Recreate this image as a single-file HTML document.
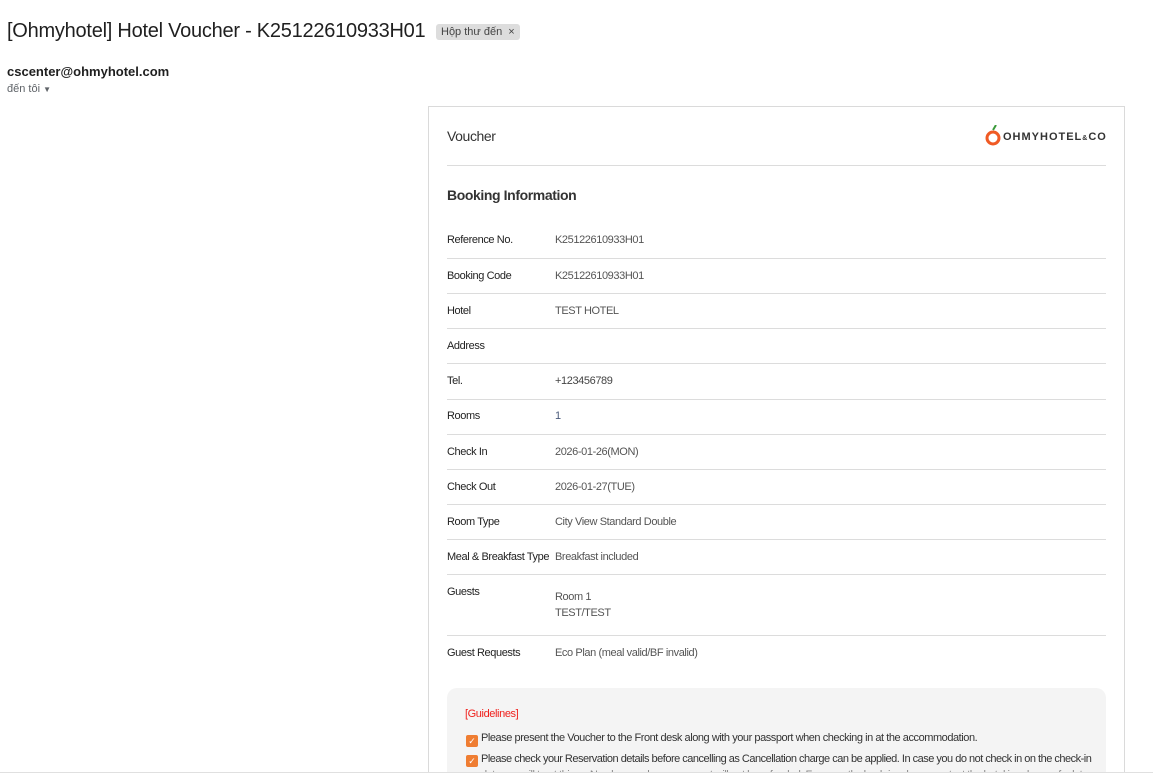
<!DOCTYPE html>
<html><head><meta charset="utf-8"><style>
*{margin:0;padding:0;box-sizing:border-box}
html,body{width:1153px;height:777px;overflow:hidden}
body{background:#fff;font-family:"Liberation Sans",sans-serif;position:relative;color:#222}
.a{position:absolute;white-space:nowrap}
.t{font-size:20px;color:#1f1f1f;left:7px;top:20px;letter-spacing:-0.25px}
.tag{left:436px;top:24px;background:#ddd;color:#444;font-size:11px;padding:2px 5px;border-radius:3px}
.card{position:absolute;left:428px;top:106px;width:697px;height:680px;border:1px solid #dadada}
.l{font-size:11px;letter-spacing:-0.4px;color:#222}
.v{font-size:11px;letter-spacing:-0.4px;color:#555}
.hr{position:absolute;left:447px;width:659px;height:1px;background:#dcdcdc}
.g{position:absolute;left:447px;top:688px;width:659px;height:120px;background:#f4f4f4;border-radius:10px}
.cb{position:absolute;width:12px;height:12px;background:#ef7d32;border-radius:2px;color:#fff;font-size:9px;line-height:12px;text-align:center}
.gt{font-size:11px;letter-spacing:-0.45px;color:#333}
</style></head><body>
<div class="a t">[Ohmyhotel] Hotel Voucher - K25122610933H01</div>
<div class="a tag">Hộp thư đến &nbsp;×</div>
<div class="a" style="left:7px;top:64px;font-size:13px;font-weight:bold;color:#1f1f1f">cscenter@ohmyhotel.com</div>
<div class="a" style="left:7px;top:83px;font-size:11px;color:#5f6368">đến tôi <span style="font-size:8px">▼</span></div>
<div class="card"></div>
<div class="a" style="left:447px;top:128px;font-size:14px;letter-spacing:-0.4px;color:#333">Voucher</div>
<div class="a" style="left:985px;top:125px;width:14px;height:20px">
<svg width="16" height="22" viewBox="0 0 16 22"><path d="M8 5 L11 0" stroke="#3a9a3a" stroke-width="2"/><circle cx="8" cy="13" r="6" fill="none" stroke="#f05a24" stroke-width="3"/></svg></div>
<div class="a" style="left:1003px;top:131px;font-size:11px;font-weight:bold;color:#333;letter-spacing:1px">OHMYHOTEL<span style="font-size:7px">&amp;</span>CO</div>
<div class="hr" style="top:165px"></div>
<div class="a" style="left:447px;top:187px;font-size:14px;font-weight:bold;letter-spacing:-0.4px;color:#333">Booking Information</div>

<div class="a l" style="left:447px;top:234px">Reference No.</div><div class="a v" style="left:555px;top:234px">K25122610933H01</div>
<div class="hr" style="top:258px"></div>
<div class="a l" style="left:447px;top:270px">Booking Code</div><div class="a v" style="left:555px;top:270px">K25122610933H01</div>
<div class="hr" style="top:293px"></div>
<div class="a l" style="left:447px;top:305px">Hotel</div><div class="a v" style="left:555px;top:305px">TEST HOTEL</div>
<div class="hr" style="top:328px"></div>
<div class="a l" style="left:447px;top:340px">Address</div>
<div class="hr" style="top:363px"></div>
<div class="a l" style="left:447px;top:375px">Tel.</div><div class="a v" style="left:555px;top:375px;color:#444">+123456789</div>
<div class="hr" style="top:399px"></div>
<div class="a l" style="left:447px;top:410px">Rooms</div><div class="a v" style="left:555px;top:410px;color:#4a5a7a">1</div>
<div class="hr" style="top:434px"></div>
<div class="a l" style="left:447px;top:446px">Check In</div><div class="a v" style="left:555px;top:446px">2026-01-26(MON)</div>
<div class="hr" style="top:469px"></div>
<div class="a l" style="left:447px;top:481px">Check Out</div><div class="a v" style="left:555px;top:481px">2026-01-27(TUE)</div>
<div class="hr" style="top:504px"></div>
<div class="a l" style="left:447px;top:516px">Room Type</div><div class="a v" style="left:555px;top:516px">City View Standard Double</div>
<div class="hr" style="top:539px"></div>
<div class="a l" style="left:447px;top:551px">Meal &amp; Breakfast Type</div><div class="a v" style="left:555px;top:551px">Breakfast included</div>
<div class="hr" style="top:574px"></div>
<div class="a l" style="left:447px;top:586px">Guests</div><div class="a v" style="left:555px;top:591px">Room 1</div><div class="a v" style="left:555px;top:607px">TEST/TEST</div>
<div class="hr" style="top:635px"></div>
<div class="a l" style="left:447px;top:647px">Guest Requests</div><div class="a v" style="left:555px;top:647px">Eco Plan (meal valid/BF invalid)</div>

<div class="g"></div>
<div class="a" style="left:465px;top:708px;font-size:11px;letter-spacing:-0.4px;color:#f0201c">[Guidelines]</div>
<div class="cb" style="left:466px;top:735px">✓</div>
<div class="a gt" style="left:481px;top:732px">Please present the Voucher to the Front desk along with your passport when checking in at the accommodation.</div>
<div class="cb" style="left:466px;top:755px">✓</div>
<div class="a gt" style="left:481px;top:753px;letter-spacing:-0.5px">Please check your Reservation details before cancelling as Cancellation charge can be applied. In case you do not check in on the check-in</div>
<div class="a gt" style="left:481px;top:769px;color:#888;letter-spacing:-0.5px">date, we will treat this as No-show and your payment will not be refunded. For smooth check-in, please contact the hotel in advance for late</div>
<div style="position:absolute;left:0;top:772px;width:1153px;height:5px;background:#fff;border-top:1px solid #e0e0e0"></div>
</body></html>
